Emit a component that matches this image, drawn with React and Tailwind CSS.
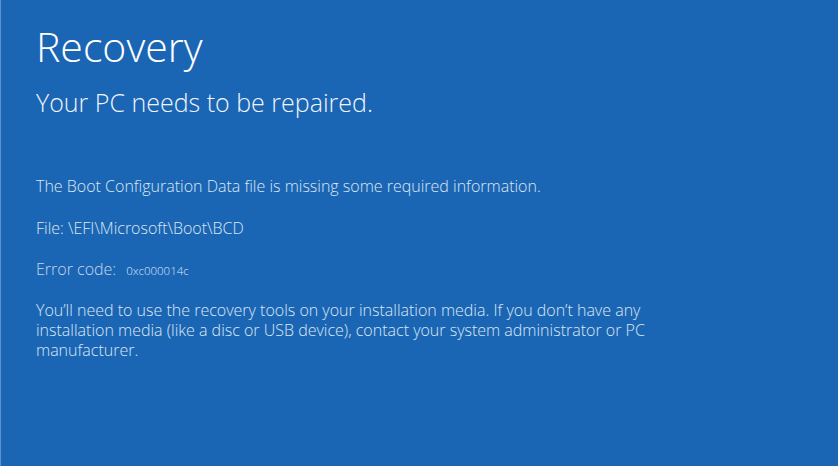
export default function App() {
  return (
    <div
      className="w-[838px] h-[466px] bg-[#1b66b4] border-l border-[#5f92c8] text-white overflow-hidden"
      style={{ fontFamily: '"Open Sans", "Noto Sans", sans-serif' }}
    >
      <div className="pl-[35px] pt-[20px]">
        <h1 className="text-[41px] leading-[52px] font-light">Recovery</h1>
        <h2 className="mt-[14px] text-[25px] leading-[32px] font-light text-[#f1f5fa]">
          Your PC needs to be repaired.
        </h2>

        <div className="mt-[58px] text-[16px] leading-[20px] font-light text-[#dce7f3]">
          <p>The Boot Configuration Data file is missing some required information.</p>
          <p className="mt-[22px]">File: \EFI\Microsoft\Boot\BCD</p>
          <p className="mt-[21px] flex items-baseline">
            <span className="text-[#c4d6ea]">Error code:</span>
            <span className="ml-[10px] text-[11.5px]">0xc000014c</span>
          </p>
          <p className="mt-[19px]">
            You’ll need to use the recovery tools on your installation media. If you don’t have any
            <br />
            installation media (like a disc or USB device), contact your system administrator or PC
            <br />
            manufacturer.
          </p>
        </div>
      </div>
    </div>
  );
}
